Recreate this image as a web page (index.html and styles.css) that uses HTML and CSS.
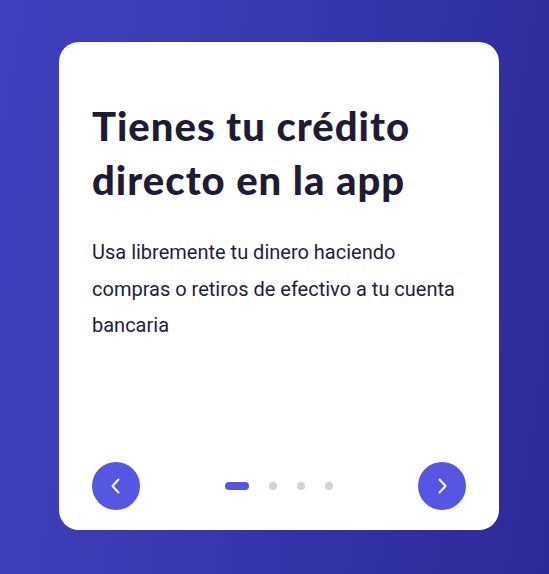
FILE: index.html
```html
<!DOCTYPE html>
<html lang="es">
<head>
<meta charset="utf-8">
<link rel="stylesheet" href="styles.css">
</head>
<body>
<main class="stage">
  <section class="card">
    <div class="content">
      <h1 class="title">Tienes tu crédito directo en la app</h1>
      <p class="text">Usa libremente tu dinero haciendo compras o retiros de efectivo a tu cuenta bancaria</p>
    </div>
    <div class="controls">
      <button class="nav" aria-label="Anterior">
        <svg width="16" height="16" viewBox="0 0 16 16"><path d="M10.5 1.5 L4.5 8 L10.5 14.5" fill="none" stroke="#fff" stroke-width="2" stroke-linecap="round" stroke-linejoin="round"/></svg>
      </button>
      <div class="dots">
        <span class="dot active"></span>
        <span class="dot"></span>
        <span class="dot"></span>
        <span class="dot"></span>
      </div>
      <button class="nav" aria-label="Siguiente">
        <svg width="16" height="16" viewBox="0 0 16 16"><path d="M5.5 1.5 L11.5 8 L5.5 14.5" fill="none" stroke="#fff" stroke-width="2" stroke-linecap="round" stroke-linejoin="round"/></svg>
      </button>
    </div>
  </section>
</main>
</body>
</html>
```
FILE: styles.css
```css
html, body {
  margin: 0;
  padding: 0;
}
body {
  width: 549px;
  height: 574px;
  overflow: hidden;
  background: linear-gradient(100deg, #4141c0 0%, #3535ab 55%, #2d2a98 100%);
}
.stage {
  padding: 42px 0 0 59px;
}
.card {
  box-sizing: border-box;
  width: 440px;
  height: 488px;
  background: #fff;
  border-radius: 20px;
  padding: 57px 33px 20px 33px;
  display: flex;
  flex-direction: column;
  justify-content: space-between;
}
.title {
  margin: 0;
  font-family: "Lato", "Noto Sans", sans-serif;
  font-weight: 900;
  font-size: 40px;
  line-height: 54px;
  color: #1e1b36;
  letter-spacing: 1px;
}
.text {
  margin: 27px 0 0 0;
  font-family: "Roboto", "Noto Sans", sans-serif;
  font-weight: 400;
  font-size: 20px;
  line-height: 36.5px;
  color: #1f1d3a;
}
.controls {
  display: flex;
  align-items: center;
  justify-content: space-between;
}
.nav {
  width: 48px;
  height: 48px;
  border: 0;
  padding: 0;
  border-radius: 50%;
  background: #5557e2;
  display: flex;
  align-items: center;
  justify-content: center;
}
.dots {
  display: flex;
  align-items: center;
  gap: 20px;
}
.dot {
  width: 8px;
  height: 8px;
  border-radius: 4px;
  background: #d2d2d9;
}
.dot.active {
  width: 24px;
  background: #5557e2;
}
```
